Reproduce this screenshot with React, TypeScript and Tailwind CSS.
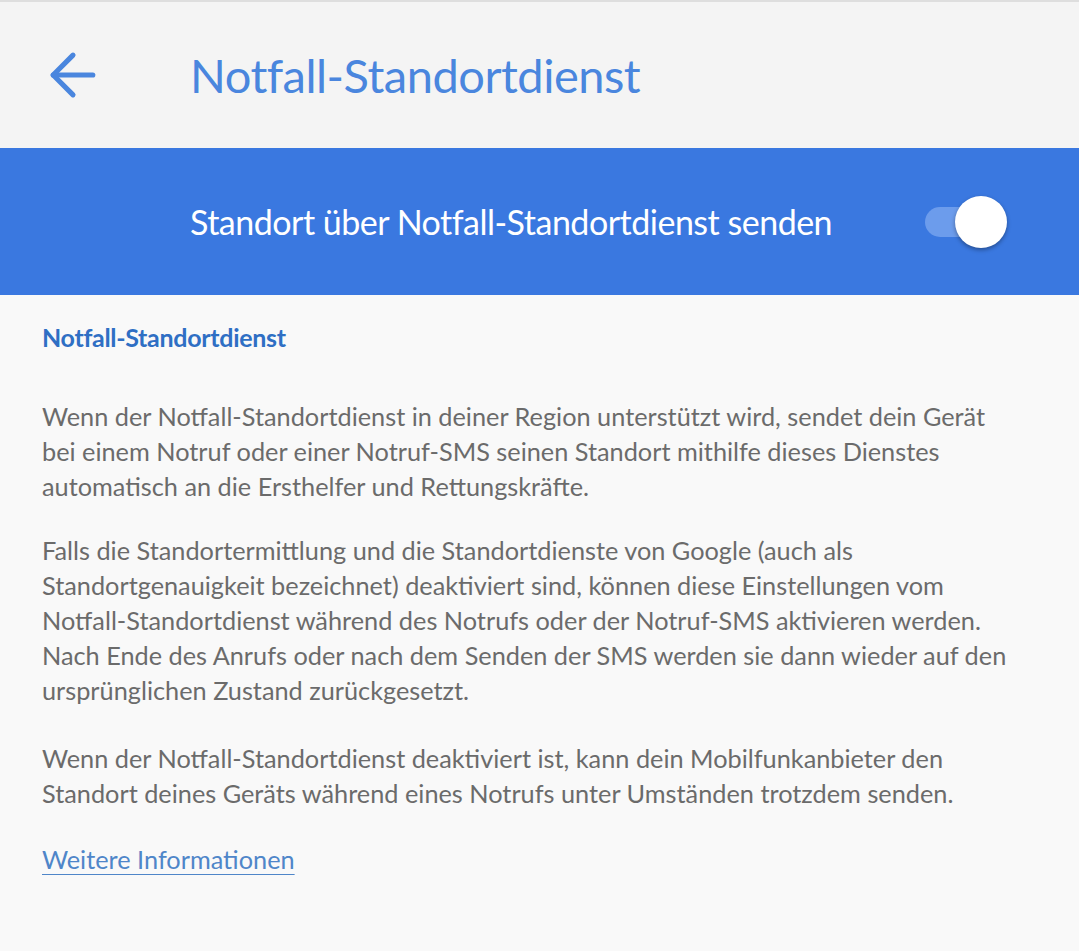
import { ArrowLeft } from "lucide-react";

const paragraphs: string[][] = [
  [
    "Wenn der Notfall-Standortdienst in deiner Region unterstützt wird, sendet dein Gerät",
    "bei einem Notruf oder einer Notruf-SMS seinen Standort mithilfe dieses Dienstes",
    "automatisch an die Ersthelfer und Rettungskräfte.",
  ],
  [
    "Falls die Standortermittlung und die Standortdienste von Google (auch als",
    "Standortgenauigkeit bezeichnet) deaktiviert sind, können diese Einstellungen vom",
    "Notfall-Standortdienst während des Notrufs oder der Notruf-SMS aktivieren werden.",
    "Nach Ende des Anrufs oder nach dem Senden der SMS werden sie dann wieder auf den",
    "ursprünglichen Zustand zurückgesetzt.",
  ],
  [
    "Wenn der Notfall-Standortdienst deaktiviert ist, kann dein Mobilfunkanbieter den",
    "Standort deines Geräts während eines Notrufs unter Umständen trotzdem senden.",
  ],
];

// spacing under each paragraph, taken from the screenshot
const gaps = ["mb-[29px]", "mb-[33px]", "mb-[31px]"];

const App = () => {
  return (
    <div
      className="min-h-[951px] w-full bg-[#f9f9f9]"
      style={{ fontFamily: "Lato, 'Noto Sans', sans-serif" }}
    >
      {/* Header */}
      <header className="flex h-[148px] items-center border-t-2 border-[#dedede] bg-[#f4f4f4]">
        <div className="flex w-[190px] items-center pl-[39px]">
          <ArrowLeft className="h-[68px] w-[68px] text-[#4a86de]" strokeWidth={1.8} />
        </div>
        <h1 className="text-[47px] font-normal tracking-[-0.5px] text-[#4a86de]">
          Notfall-Standortdienst
        </h1>
      </header>

      {/* Main switch */}
      <div className="flex h-[147px] items-center bg-[#3a78e0] pl-[190px] pr-[72px]">
        <span className="flex-1 text-[34px] tracking-[-0.5px] text-white">
          Standort über Notfall-Standortdienst senden
        </span>
        <div className="relative h-[52px] w-[82px]">
          <div className="absolute left-0 top-[11px] h-[30px] w-[64px] rounded-full bg-[#6c9cec]" />
          <div className="absolute right-0 top-0 h-[52px] w-[52px] rounded-full bg-white shadow-[0_2px_4px_rgba(0,0,0,0.35)]" />
        </div>
      </div>

      {/* Body */}
      <div className="px-[42px] pt-[24px]">
        <h2 className="text-[25px] font-bold tracking-[-0.3px] text-[#2f6fc4]">
          Notfall-Standortdienst
        </h2>
        <div className="mt-[42px] flex flex-col text-[25.3px] leading-[35px] text-[#6b6b6b]">
          {paragraphs.map((lines, i) => (
            <p key={i} className={gaps[i]}>
              {lines.map((l, j) => (
                <span key={j} className="block whitespace-nowrap">
                  {l}
                </span>
              ))}
            </p>
          ))}
          <a href="#" className="self-start text-[#4f86c9] underline decoration-1 underline-offset-[5px]">
            Weitere Informationen
          </a>
        </div>
      </div>
    </div>
  );
};

export default App;
